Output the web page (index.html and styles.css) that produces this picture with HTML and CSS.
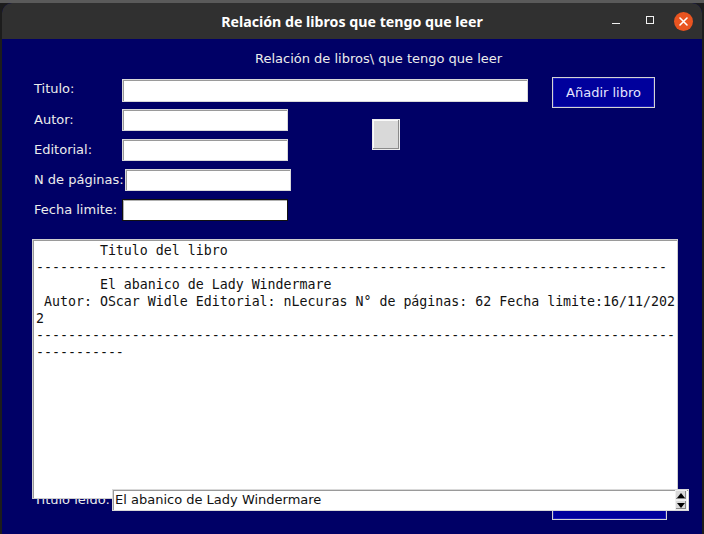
FILE: index.html
```html
<!DOCTYPE html>
<html lang="es">
<head>
<meta charset="utf-8">
<title>Relación de libros que tengo que leer</title>
<link rel="stylesheet" href="styles.css">
</head>
<body>
<div class="desk">
  <div class="window">
    <div class="titlebar">
      <span class="title">Relación de libros que tengo que leer</span>
      <div class="controls">
        <span class="ctl-min"></span>
        <span class="ctl-max"></span>
        <span class="ctl-close">
          <svg width="19" height="19" viewBox="0 0 19 19"><path d="M6 6 L13 13 M13 6 L6 13" stroke="#fff" stroke-width="1.6" stroke-linecap="round"/></svg>
        </span>
      </div>
    </div>
    <div class="content">
      <div class="header">Relación de libros\ que tengo que leer</div>
      <div class="row-first">
        <span class="lbl lbl-first">Titulo:</span>
        <div class="entry entry-wide"></div>
        <button class="btn btn-add">Añadir libro</button>
      </div>
      <div class="lower">
        <div class="fields">
          <div class="field"><span class="lbl">Autor:</span><div class="entry"></div></div>
          <div class="field"><span class="lbl">Editorial:</span><div class="entry"></div></div>
          <div class="field"><span class="lbl lbl-pages">N de páginas:</span><div class="entry"></div></div>
          <div class="field"><span class="lbl">Fecha limite:</span><div class="entry entry-focus"></div></div>
        </div>
        <button class="gray-btn"></button>
      </div>
      <pre class="textarea">        Titulo del libro
-------------------------------------------------------------------------------
        El abanico de Lady Windermare
 Autor: OScar Widle Editorial: nLecuras N° de páginas: 62 Fecha limite:16/11/202
2
--------------------------------------------------------------------------------
-----------</pre>
      <div class="bottom">
        <span class="lbl lbl-read">Titulo leído:</span>
        <div class="spinbox">
          <span class="spin-text">El abanico de Lady Windermare</span>
          <div class="spin-arrows">
            <span class="arrow"><svg width="8" height="5" viewBox="0 0 8 5"><path d="M0 5 L4 0 L8 5 Z" fill="#000"/></svg></span>
            <span class="arrow"><svg width="8" height="5" viewBox="0 0 8 5"><path d="M0 0 L8 0 L4 5 Z" fill="#000"/></svg></span>
          </div>
        </div>
        <button class="btn btn-back"></button>
      </div>
    </div>
  </div>
</div>
</body>
</html>
```
FILE: styles.css
```css
html, body {
  margin: 0;
  padding: 0;
}
body {
  width: 704px;
  height: 534px;
  overflow: hidden;
  background: #3a3a3a;
  font-family: "DejaVu Sans", sans-serif;
}
.desk {
  padding: 3px 2px 0 2px;
  height: 534px;
  box-sizing: border-box;
  background: linear-gradient(#5a5a5a 0 3px, #1c1c1c 3px);
}
.window {
  width: 700px;
  height: 531px;
  display: flex;
  flex-direction: column;
  border-radius: 10px 10px 0 0;
  overflow: hidden;
  background: #000066;
}
.titlebar {
  height: 36px;
  flex: 0 0 36px;
  background: #303030;
  display: grid;
  grid-template-columns: 1fr auto 1fr;
  align-items: center;
}
.title {
  grid-column: 2;
  color: #ffffff;
  font-family: "Noto Sans", sans-serif;
  font-weight: 700;
  font-size: 14.2px;
  line-height: 18px;
  padding-top: 1px;
}
.controls {
  grid-column: 3;
  justify-self: end;
  display: flex;
  align-items: center;
  padding-right: 9px;
}
.ctl-min {
  width: 8px;
  height: 1.5px;
  background: #f0f0f0;
  margin-top: 5px;
}
.ctl-max {
  width: 6px;
  height: 6px;
  border: 1px solid #f0f0f0;
  margin-left: 26px;
  margin-top: -2px;
}
.ctl-close {
  width: 19px;
  height: 19px;
  border-radius: 50%;
  background: #e95420;
  margin-left: 20px;
  display: flex;
}
.content {
  flex: 1;
  padding-top: 12px;
  color: #ececec;
  font-size: 13px;
}
.header {
  margin-left: 253px;
  line-height: 16px;
  height: 16px;
}
.lbl {
  line-height: 16px;
  white-space: nowrap;
  min-width: 88px;
  color: #ececec;
}
.row-first {
  margin-top: 10px;
  padding-left: 32px;
  display: flex;
  align-items: flex-start;
  height: 31px;
}
.lbl-first {
  margin-top: 4px;
}
.entry {
  width: 166px;
  height: 22px;
  box-sizing: border-box;
  background: #fff;
  border: 1px solid #d9d9d9;
  box-shadow: inset 1px 1px 0 #9a9a9a;
}
.entry-wide {
  width: 406px;
  height: 23px;
  margin-top: 2px;
}
.entry-focus {
  border-color: #111;
  box-shadow: inset 1px 1px 0 #b0b0b0;
}
.btn {
  font-family: "DejaVu Sans", sans-serif;
  font-size: 13px;
  color: #e4e4ff;
  background: #00009c;
  border: 1px solid #d4d4d4;
  box-shadow: inset 0 0 0 1px #1a1ab4;
  padding: 0;
  margin: 0;
  box-sizing: border-box;
}
.btn-add {
  width: 103px;
  height: 31px;
  margin-left: 24px;
}
.lower {
  display: flex;
  align-items: flex-start;
  padding-left: 32px;
  margin-top: 1px;
}
.fields {
  display: flex;
  flex-direction: column;
  gap: 8px;
}
.field {
  display: flex;
  align-items: center;
  height: 22px;
}
.lbl-pages {
  margin-right: 1px;
}
.gray-btn {
  width: 28px;
  height: 31px;
  margin-left: 81px;
  margin-top: 10px;
  padding: 0;
  box-sizing: border-box;
  background: #d9d9d9;
  border: 1px solid #ececec;
  box-shadow: inset -1px -1px 0 #8a8a8a, inset 1px 1px 0 #fafafa;
}
.textarea {
  position: relative;
  z-index: 2;
  margin: 18px 0 0 30px;
  width: 646px;
  height: 260px;
  box-sizing: border-box;
  background: #fff;
  border: 1px solid #cfcfcf;
  box-shadow: inset 1px 1px 0 #9a9a9a;
  padding: 1.5px 0 0 3px;
  font-family: "DejaVu Sans Mono", monospace;
  font-size: 13.28px;
  line-height: 17px;
  color: #111;
  white-space: pre;
  overflow: hidden;
}
.bottom {
  margin-top: -10px;
  padding-left: 32px;
  display: flex;
  align-items: flex-start;
}
.lbl-read {
  position: relative;
  z-index: 1;
  min-width: 78px;
  width: 78px;
  margin-top: 3px;
}
.spinbox {
  position: relative;
  z-index: 3;
  width: 577px;
  height: 22px;
  box-sizing: border-box;
  background: #fff;
  border: 1px solid #d9d9d9;
  box-shadow: inset 1px 1px 0 #9a9a9a;
  display: flex;
  align-items: center;
  padding-left: 2px;
}
.spin-text {
  flex: 1;
  color: #111;
  font-size: 13px;
  line-height: 16px;
}
.spin-arrows {
  display: flex;
  flex-direction: column;
  gap: 0;
  margin-right: 1px;
}
.arrow {
  width: 12px;
  height: 10px;
  box-sizing: border-box;
  background: #d9d9d9;
  border: 1px solid #efefef;
  box-shadow: inset -1px -1px 0 #8a8a8a;
  display: flex;
  align-items: center;
  justify-content: center;
}
.btn-back {
  position: relative;
  z-index: 1;
  width: 115px;
  height: 31px;
  margin-left: -137px;
}
```
